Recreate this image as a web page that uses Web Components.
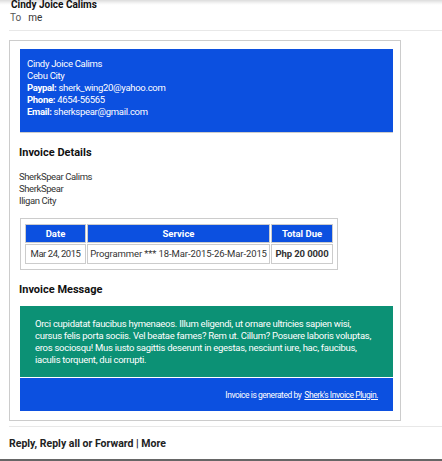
<!DOCTYPE html>
<html><head><meta charset="utf-8"><style>
html,body{margin:0;padding:0;background:#fff;height:461px;overflow:hidden}
body{font-family:Roboto,"Open Sans",sans-serif;font-size:9.5px;line-height:12px;color:#333;letter-spacing:-.3px}
</style></head><body>
<mail-view>
<mail-header name="Cindy Joice Calims" to="me"></mail-header>
<invoice-card>
<sender-block>
<div>Cindy Joice Calims</div><div>Cebu City</div>
<div><b>Paypal:</b> sherk_wing20@yahoo.com</div>
<div><b>Phone:</b> 4654-56565</div>
<div><b>Email:</b> sherkspear@gmail.com</div>
</sender-block>
<invoice-details></invoice-details>
<invoice-table></invoice-table>
<invoice-message></invoice-message>
</invoice-card>
<mail-footer></mail-footer>
</mail-view>
<script>
function def(n,html){customElements.define(n,class extends HTMLElement{constructor(){super();this.attachShadow({mode:'open'}).innerHTML=html}})}
def('mail-view',`<style>:host{display:flex;flex-direction:column;height:461px;box-sizing:border-box;background:linear-gradient(#dcdcdc,#f4f4f4 3px,#fff 5px) no-repeat top/100% 5px;border-bottom:2px solid #666}</style><slot></slot>`);
customElements.define('mail-header',class extends HTMLElement{constructor(){super();this.attachShadow({mode:'open'})}
connectedCallback(){this.shadowRoot.innerHTML=`<style>:host{display:block;margin-left:9px;height:30px;box-sizing:content-box;border-bottom:1px solid #e8e8e8;color:#111;letter-spacing:0}
.n{font-weight:700;font-size:10px;line-height:9px;padding:0 0 0 2px;color:#111;height:9px}.t{margin:3px 0 0 1px;font-size:10px;line-height:12px;color:#555;display:flex;gap:7px}.t b{font-weight:400;color:#333}</style>
<div class="n">${this.getAttribute('name')}</div><div class="t"><span>To</span><b>${this.getAttribute('to')}</b></div>`}});
def('invoice-card',`<style>:host{display:block;box-sizing:border-box;width:392px;height:381px;margin:9px 0 0 9px;border:1px solid #ccc;padding:8px 7px 8px 10px}</style><slot></slot>`);
def('sender-block',`<style>:host{display:block;box-sizing:border-box;height:84px;background:#0c50e0;border-bottom:1px solid #ccc;color:#fff;padding:9px 7px}::slotted(div){white-space:nowrap}</style><slot></slot>`);
def('invoice-details',`<style>:host{display:block;color:#333;margin-left:-1px;letter-spacing:-.4px}h3{margin:12px 0 11px;font-size:11px;line-height:15px;font-weight:700;color:#111;letter-spacing:0}</style><h3>Invoice Details</h3><div>SherkSpear Calims</div><div>SherkSpear</div><div>Iligan City</div>`);
def('invoice-table',`<style>:host{display:block;width:318px;margin:11px 0 0 0;letter-spacing:0}
table{box-sizing:border-box;width:318px;border:1px solid #ccc;border-spacing:1px;padding:4px 3px;border-collapse:separate;table-layout:fixed;font-size:9.5px}
th{box-sizing:border-box;background:#0c50e0;color:#fff;height:19px;padding:0;font-weight:700;border:1px solid #ccc}
td{box-sizing:border-box;height:20px;padding:0;border:1px solid #ccc;white-space:nowrap;text-align:center;letter-spacing:-.1px}
td.d{letter-spacing:-.45px}
</style><table><colgroup><col style="width:61px"><col style="width:183px"><col style="width:62px"></colgroup>
<tr><th>Date</th><th>Service</th><th>Total Due</th></tr>
<tr><td class="d">Mar 24, 2015</td><td>Programmer *** 18-Mar-2015-26-Mar-2015</td><td><b>Php 20 0000</b></td></tr></table>`);
def('invoice-message',`<style>:host{display:block;margin-top:0}h3{margin:12px 0 9px -1px;font-size:11px;line-height:15px;font-weight:700;color:#111;letter-spacing:0}
.m{box-sizing:border-box;height:71px;background:#0c9175;color:#fff;padding:12px 15px;letter-spacing:-.28px}
.f{box-sizing:border-box;height:33px;margin-top:1px;background:#0c50e0;color:#fff;font-size:8.5px;letter-spacing:-.45px;display:flex;align-items:center;justify-content:flex-end;padding:0 15px;gap:3px;white-space:pre}a{color:#fff;text-decoration:underline}</style>
<h3>Invoice Message</h3><div class="m">Orci cupidatat faucibus hymenaeos. Illum eligendi, ut ornare ultricies sapien wisi, cursus felis porta sociis. Vel beatae fames? Rem ut. Cillum? Posuere laboris voluptas, eros sociosqu! Mus iusto sagittis deserunt in egestas, nesciunt iure, hac, faucibus, iaculis torquent, dui corrupti.</div>
<div class="f"><span>Invoice is generated by</span><a href="#">Sherk's Invoice Plugin.</a></div>`);
def('mail-footer',`<style>:host{display:block;margin:5px 0 0 9px;border-top:1px solid #e8e8e8;padding-top:11px;font-size:10.5px;letter-spacing:0;font-weight:700;color:#222;line-height:12px}</style>Reply, Reply all or Forward | More`);
</script>
</body></html>
